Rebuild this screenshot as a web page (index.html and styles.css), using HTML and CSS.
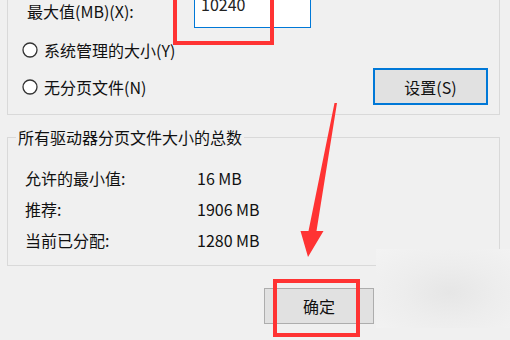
FILE: index.html
```html
<!DOCTYPE html>
<html lang="zh-CN">
<head>
<meta charset="utf-8">
<title>虚拟内存</title>
<link rel="stylesheet" href="styles.css">
</head>
<body>
<div class="dialog">
  <div class="group group-top">
    <div class="row row-max">
      <span class="label-max">最大值(MB)(X):</span>
      <div class="input-wrap">
        <div class="input">10240</div>
        <div class="mark mark-input"></div>
      </div>
    </div>
    <div class="row radio-row">
      <svg class="radio" width="16" height="16" viewBox="0 0 16 16"><circle cx="8" cy="8" r="7" fill="#fff" stroke="#333" stroke-width="1.3"/></svg>
      <span>系统管理的大小(Y)</span>
    </div>
    <div class="row radio-row radio-row-2">
      <svg class="radio" width="16" height="16" viewBox="0 0 16 16"><circle cx="8" cy="8" r="7" fill="#fff" stroke="#333" stroke-width="1.3"/></svg>
      <span class="radio-label">无分页文件(N)</span>
      <button class="btn btn-set">设置(S)</button>
    </div>
  </div>

  <fieldset class="totals">
    <legend>所有驱动器分页文件大小的总数</legend>
    <div class="stat"><span class="stat-label">允许的最小值:</span><span>16 MB</span></div>
    <div class="stat"><span class="stat-label">推荐:</span><span>1906 MB</span></div>
    <div class="stat"><span class="stat-label">当前已分配:</span><span>1280 MB</span></div>
  </fieldset>

  <div class="actions">
    <div class="btn-wrap">
      <button class="btn btn-ok">确定</button>
      <div class="mark mark-ok"></div>
    </div>
    <button class="btn btn-cancel">取消</button>
  </div>

  <div class="blur"></div>

  <svg class="arrow" width="510" height="340" viewBox="0 0 510 340">
    <polygon points="334.5,115 337,115 316.5,243 323.5,243 308,269 300.5,243 308.5,243" fill="#ff3333"/>
  </svg>
</div>
</body>
</html>
```

FILE: styles.css
```css
* { box-sizing: border-box; }

html, body {
  margin: 0;
  padding: 0;
  background: #f0f0f0;
  overflow: hidden;
}

body {
  width: 510px;
  height: 340px;
  font-family: "Noto Sans CJK SC", "Noto Sans", sans-serif;
  font-size: 16px;
  color: #111;
}

.dialog {
  position: relative;
  width: 510px;
  height: 340px;
  padding-left: 7px;
}

.group {
  width: 493px;
  border: 1px solid #d9d9d9;
}

.group-top {
  border-top: none;
  margin-top: -12px;
  padding: 0 11px 9px 15px;
}

.row {
  display: flex;
  align-items: center;
}

.row-max {
  height: 40px;
  align-items: flex-start;
}

.label-max {
  width: 171px;
  margin-top: 13px;
  padding-left: 4px;
  line-height: 20px;
  white-space: nowrap;
}

.input-wrap {
  position: relative;
}

.input {
  width: 117px;
  height: 40px;
  background: #fff;
  border: 1px solid #0078d7;
  border-top: none;
  padding: 6px 6px 0;
  line-height: 20px;
  color: #222;
}

.mark {
  position: absolute;
  border: 4px solid #ff3333;
}

.mark-input {
  left: -21px;
  top: -10px;
  width: 101px;
  height: 67px;
}

.radio-row {
  height: 24px;
  margin-top: 10px;
  line-height: 20px;
}

.radio-row-2 {
  height: 37px;
  margin-top: 6px;
}

.radio {
  display: block;
  flex: 0 0 16px;
  margin-left: -1px;
  margin-right: 6px;
}

.radio-label {
  flex: 1;
}

.btn {
  font-family: inherit;
  font-size: 16px;
  color: #111;
  background: #e1e1e1;
  border: 1px solid #adadad;
  padding: 0;
  margin: 0;
}

.btn-set {
  width: 115px;
  height: 37px;
  border: 2px solid #0078d7;
}

.totals {
  width: 493px;
  margin: 12px 0 0;
  border: 1px solid #d9d9d9;
  padding: 15px 8px 10px 8px;
}

.totals legend {
  padding: 0 2px;
  line-height: 20px;
}

.stat {
  display: flex;
  align-items: center;
  height: 31px;
  padding-left: 9px;
}

.stat-label {
  width: 172px;
}

.actions {
  display: flex;
  justify-content: flex-end;
  gap: 5px;
  width: 493px;
  margin-top: 22px;
  padding-right: 11px;
}

.btn-wrap {
  position: relative;
}

.btn-ok,
.btn-cancel {
  width: 110px;
  height: 36px;
}

.mark-ok {
  left: 9px;
  top: -9px;
  width: 87px;
  height: 58px;
}

.blur {
  position: absolute;
  left: 376px;
  top: 261px;
  width: 134px;
  height: 79px;
  background: radial-gradient(ellipse at 55% 55%, #e6e6e6 0%, #ededed 45%, #f3f3f3 100%);
}

.arrow {
  position: absolute;
  left: 0;
  top: 0;
  pointer-events: none;
}
```
